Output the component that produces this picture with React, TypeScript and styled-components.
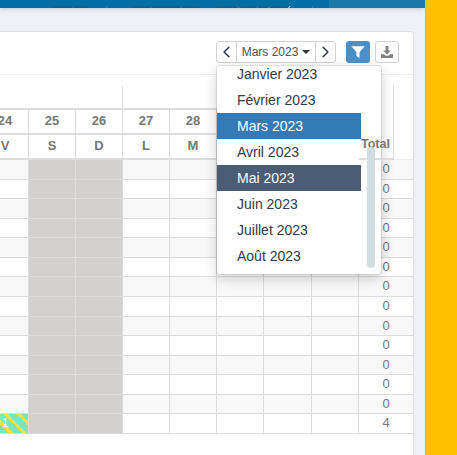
import { FC } from 'react'
import styled, { createGlobalStyle } from 'styled-components'
import { ChevronLeft, ChevronRight } from 'lucide-react'

const GlobalStyle = createGlobalStyle`
  html, body {
    margin: 0;
    height: 100%;
    overflow: hidden;
    background: #eef0f6;
    font-family: "Liberation Sans", Arial, sans-serif;
  }
  #root {
    height: 100%;
  }
`

const months = ['Janvier 2023', 'Février 2023', 'Mars 2023', 'Avril 2023', 'Mai 2023', 'Juin 2023', 'Juillet 2023', 'Août 2023']
const days = [
  { num: '24', letter: 'V' },
  { num: '25', letter: 'S', off: true },
  { num: '26', letter: 'D', off: true },
  { num: '27', letter: 'L' },
  { num: '28', letter: 'M' },
  { num: '', letter: '' },
  { num: '', letter: '' },
  { num: '', letter: '' },
]
// the table is scrolled sideways: the first column starts 18px off the page
const widths = [47, 47, 47, 47, 47, 47, 48, 47]
const totals = [0, 0, 0, 0, 0, 0, 0, 0, 0, 0, 0, 0, 0, 4]

const DownloadIcon: FC = () => (
  <svg width="14" height="14" viewBox="0 0 14 14">
    <path d="M5.6 1h2.8v4.6h2.4L7 9.4 3.2 5.6h2.4z" fill="#808080" />
    <path d="M1 9.2h3l1.6 1.6h2.8L10 9.2h3V13H1z" fill="#808080" />
  </svg>
)

const FilterIcon: FC = () => (
  <svg width="14" height="14" viewBox="0 0 14 14">
    <path d="M0.3 1.2h13.4L8.6 7v6L5.4 11V7z" fill="#fff" />
  </svg>
)

const App: FC = () => {
  return (
    <Page>
      <GlobalStyle />
      <Main>
        <Band>
          <BandArt>
            <svg width="329" height="8" viewBox="0 0 329 8">
              <circle cx="71" cy="-8" r="20" fill="#17608a" />
              <circle cx="90" cy="-10" r="20" fill="none" stroke="#2f8ab5" />
              <circle cx="166" cy="-29" r="45" fill="#17608a" />
              <circle cx="166" cy="-10" r="19" fill="none" stroke="#2f8ab5" />
              <circle cx="252" cy="-20" r="41" fill="#17608a" />
              <circle cx="254" cy="-22" r="28" fill="none" stroke="#2f8ab5" />
              <circle cx="285" cy="-15" r="32" fill="none" stroke="#2f8ab5" />
              <path d="M290 0L284 8" stroke="#d5e3ea" />
            </svg>
          </BandArt>
          <BandEnd />
        </Band>
        <Content>
          <Card>
            <Toolbar>
              <Pager>
                <PagerButton><ChevronLeft size={20} strokeWidth={2} color="#2b3a55" /></PagerButton>
                <PagerLabel>Mars 2023<Caret /></PagerLabel>
                <PagerButton><ChevronRight size={20} strokeWidth={2} color="#2b3a55" /></PagerButton>
              </Pager>
              <FilterButton><FilterIcon /></FilterButton>
              <ExportButton><DownloadIcon /></ExportButton>
            </Toolbar>
            <MonthMenu>
              <MonthList>
                {months.map((m) => (
                  <MonthItem key={m} $state={m === 'Mars 2023' ? 'selected' : m === 'Mai 2023' ? 'hover' : undefined}>{m}</MonthItem>
                ))}
              </MonthList>
            </MonthMenu>
            <MenuThumb />
            <Table>
              <GroupRow>
                <GroupCell $width={141} />
                <GroupCell $width={271} />
              </GroupRow>
              <HeadRow>
                {days.map((d, i) => <HeadCell key={i} $width={widths[i]}>{d.num}</HeadCell>)}
                <TotalHead />
              </HeadRow>
              <HeadRow $last>
                {days.map((d, i) => <HeadCell key={i} $width={widths[i]} $last>{d.letter}</HeadCell>)}
                <TotalHead $last>Total</TotalHead>
              </HeadRow>
              {totals.map((total, r) => (
                <BodyRow key={r} $striped={r % 2 === 0 && r < 13}>
                  {days.map((d, i) => (
                    <BodyCell key={i} $width={widths[i]} $off={d.off} $hatched={i === 0 && r === 13}>
                      {i === 0 && r === 13 ? '1' : ''}
                    </BodyCell>
                  ))}
                  <TotalCell>{total}</TotalCell>
                </BodyRow>
              ))}
            </Table>
          </Card>
        </Content>
      </Main>
      <Aside />
    </Page>
  )
}

export default App

const Page = styled.div`
  display: flex;
  width: 457px;
  height: 455px;
  overflow: hidden;
`
const Main = styled.div`
  display: flex;
  flex-direction: column;
  width: 425px;
`
const Aside = styled.div`
  width: 32px;
  background: #ffc200;
`
const Band = styled.div`
  display: flex;
  height: 8px;
  flex-shrink: 0;
  box-shadow: 0 1px 4px rgba(0, 0, 0, 0.18);
`
const BandArt = styled.div`
  width: 329px;
  height: 8px;
  background: #036fa5;
  overflow: hidden;
`
const BandEnd = styled.div`
  flex: 1;
  background: #1a79a8;
`
const Content = styled.div`
  flex: 1;
  padding: 23px 11px 0 0;
`
const Card = styled.div`
  position: relative;
  height: 100%;
  box-sizing: border-box;
  background: #fff;
  border-top: 1px solid #dfe0e4;
  border-right: 1px solid #dfe0e4;
  border-radius: 0 4px 0 0;
`
const Toolbar = styled.div`
  display: flex;
  align-items: flex-start;
  height: 43px;
  box-sizing: border-box;
  padding: 9px 14px 0 216px;
  border-bottom: 1px solid #eeeeee;
`
const Pager = styled.div`
  display: flex;
  height: 22px;
  box-sizing: border-box;
  border: 1px solid #d2d2d2;
  border-radius: 3px;
  margin-right: 10px;
`
const PagerButton = styled.div`
  display: flex;
  align-items: center;
  justify-content: center;
  width: 19px;
`
const PagerLabel = styled.div`
  display: flex;
  align-items: center;
  justify-content: center;
  gap: 4px;
  width: 80px;
  box-sizing: border-box;
  border-left: 1px solid #d2d2d2;
  border-right: 1px solid #d2d2d2;
  font-size: 12px;
  color: #4a5468;
`
const Caret = styled.span`
  width: 0;
  height: 0;
  border-left: 4px solid transparent;
  border-right: 4px solid transparent;
  border-top: 4px solid #333;
`
const FilterButton = styled.div`
  display: flex;
  align-items: center;
  justify-content: center;
  width: 24px;
  height: 22px;
  margin-right: 5px;
  border-radius: 3px;
  background: #4a90c8;
`
const ExportButton = styled.div`
  display: flex;
  align-items: center;
  justify-content: center;
  width: 24px;
  height: 22px;
  box-sizing: border-box;
  border: 1px solid #d2d2d2;
  border-radius: 3px;
`
const MonthMenu = styled.div`
  position: absolute;
  left: 217px;
  top: 34px;
  width: 164px;
  height: 208px;
  overflow: hidden;
  z-index: 5;
  background: #fff;
  border-radius: 3px;
  box-shadow: 0 4px 14px rgba(0, 0, 0, 0.2), 0 0 0 1px rgba(0, 0, 0, 0.08);
`
const MonthList = styled.div`
  display: flex;
  flex-direction: column;
  width: 144px;
  margin-top: -5px;
`
const MonthItem = styled.div<{ $state?: 'selected' | 'hover' }>`
  height: 26px;
  line-height: 26px;
  padding-left: 20px;
  font-size: 14px;
  color: ${(p) => (p.$state ? '#fff' : '#333a4d')};
  background: ${(p) => (p.$state === 'selected' ? '#337ab7' : p.$state === 'hover' ? '#4a5d75' : 'transparent')};
`
const MenuThumb = styled.div`
  position: absolute;
  top: 115px;
  left: 367px;
  width: 8px;
  height: 121px;
  z-index: 7;
  border-radius: 4px;
  background: #d3dce0;
`
const Table = styled.div`
  display: flex;
  flex-direction: column;
  margin-left: -18px;
  padding-top: 11px;
`
const GroupRow = styled.div`
  display: flex;
  height: 22px;
`
const GroupCell = styled.div<{ $width: number }>`
  width: ${(p) => p.$width}px;
  flex-shrink: 0;
  box-sizing: border-box;
  border-right: 1px solid #dcdcdc;
`
const HeadRow = styled.div<{ $last?: boolean }>`
  display: flex;
  height: ${(p) => (p.$last ? 27 : 25)}px;
  ${(p) => p.$last && 'box-shadow: inset 0 -1px 0 #eeeeee;'}
`
const HeadCell = styled.div<{ $width: number; $last?: boolean }>`
  display: flex;
  align-items: center;
  justify-content: center;
  width: ${(p) => p.$width}px;
  flex-shrink: 0;
  box-sizing: border-box;
  padding-bottom: 3px;
  border-top: 2px solid #dcdcdc;
  border-right: 1px solid #dcdcdc;
  ${(p) => p.$last && 'border-bottom: 2px solid #dcdcdc;'}
  font-size: 13px;
  font-weight: bold;
  color: #777;
`
const TotalHead = styled.div<{ $last?: boolean }>`
  position: relative;
  z-index: 6;
  width: 35px;
  box-sizing: border-box;
  padding-left: 2px;
  border-right: 1px solid #dcdcdc;
  ${(p) => p.$last && 'border-bottom: 2px solid #dcdcdc;'}
  font-size: 12.5px;
  font-weight: bold;
  line-height: 23px;
  white-space: nowrap;
  color: #777;
`
const BodyRow = styled.div<{ $striped?: boolean }>`
  display: flex;
  height: 19.57px;
  box-sizing: border-box;
  border-bottom: 1px solid #dcdcdc;
  background: ${(p) => (p.$striped ? '#f8f8f8' : '#fff')};
`
const BodyCell = styled.div<{ $width: number; $off?: boolean; $hatched?: boolean }>`
  width: ${(p) => p.$width}px;
  flex-shrink: 0;
  box-sizing: border-box;
  border-right: 1px solid #dcdcdc;
  text-align: center;
  font-size: 13px;
  line-height: 18px;
  color: #fff;
  ${(p) => p.$off && 'background: #d2d1cf;'}
  ${(p) => p.$hatched && 'background: repeating-linear-gradient(45deg, #ffe14d 0 3px, #7de5b8 3px 9.5px);'}
`
const TotalCell = styled.div`
  flex: 1;
  text-align: center;
  font-size: 13px;
  line-height: 18px;
  color: #777;
`
